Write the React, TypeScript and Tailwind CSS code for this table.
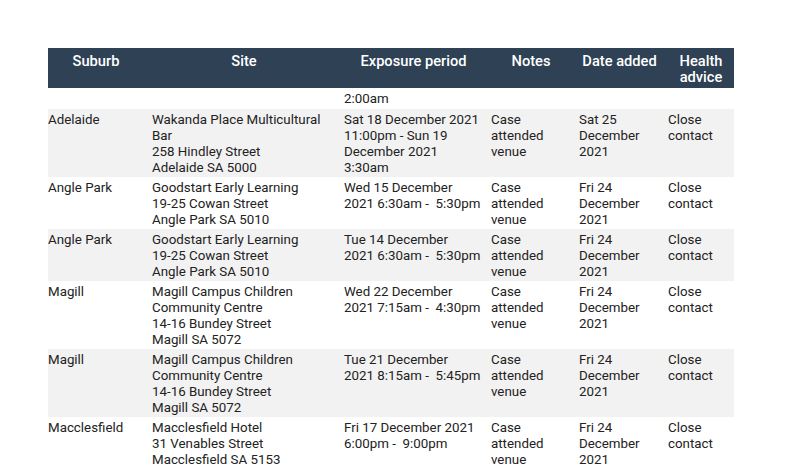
import React from "react";

type Row = { suburb: string; site: string[]; exposure: string[]; notes: string[]; date: string[]; advice: string[] };

const rows: Row[] = [
  {
    suburb: "Adelaide",
    site: ["Wakanda Place Multicultural", "Bar", "258 Hindley Street", "Adelaide SA 5000"],
    exposure: ["Sat 18 December 2021", "11:00pm - Sun 19", "December 2021", "3:30am"],
    notes: ["Case", "attended", "venue"],
    date: ["Sat 25", "December", "2021"],
    advice: ["Close", "contact"],
  },
  {
    suburb: "Angle Park",
    site: ["Goodstart Early Learning", "19-25 Cowan Street", "Angle Park SA 5010"],
    exposure: ["Wed 15 December", "2021 6:30am -\u00a0 5:30pm"],
    notes: ["Case", "attended", "venue"],
    date: ["Fri 24", "December", "2021"],
    advice: ["Close", "contact"],
  },
  {
    suburb: "Angle Park",
    site: ["Goodstart Early Learning", "19-25 Cowan Street", "Angle Park SA 5010"],
    exposure: ["Tue 14 December", "2021 6:30am -\u00a0 5:30pm"],
    notes: ["Case", "attended", "venue"],
    date: ["Fri 24", "December", "2021"],
    advice: ["Close", "contact"],
  },
  {
    suburb: "Magill",
    site: ["Magill Campus Children", "Community Centre", "14-16 Bundey Street", "Magill SA 5072"],
    exposure: ["Wed 22 December", "2021 7:15am -\u00a0 4:30pm"],
    notes: ["Case", "attended", "venue"],
    date: ["Fri 24", "December", "2021"],
    advice: ["Close", "contact"],
  },
  {
    suburb: "Magill",
    site: ["Magill Campus Children", "Community Centre", "14-16 Bundey Street", "Magill SA 5072"],
    exposure: ["Tue 21 December", "2021 8:15am -\u00a0 5:45pm"],
    notes: ["Case", "attended", "venue"],
    date: ["Fri 24", "December", "2021"],
    advice: ["Close", "contact"],
  },
  {
    suburb: "Macclesfield",
    site: ["Macclesfield Hotel", "31 Venables Street", "Macclesfield SA 5153"],
    exposure: ["Fri 17 December 2021", "6:00pm -\u00a0 9:00pm"],
    notes: ["Case", "attended", "venue"],
    date: ["Fri 24", "December", "2021"],
    advice: ["Close", "contact"],
  },
];

function Lines({ lines }: { lines: string[] }) {
  return (
    <>
      {lines.map((l, i) => (
        <div key={i} className="whitespace-nowrap">{l}</div>
      ))}
    </>
  );
}

export default function App() {
  return (
    <div className="h-[469px] w-[785px] overflow-hidden bg-white pt-12 pl-12" style={{ fontFamily: "Roboto, 'Liberation Sans', sans-serif" }}>
      <table className="w-[686px] table-fixed border-collapse text-[13.33px] leading-[16px] text-[#222]">
        <colgroup>
          <col className="w-[104px]" />
          <col className="w-[192px]" />
          <col className="w-[147px]" />
          <col className="w-[88px]" />
          <col className="w-[89px]" />
          <col className="w-[66px]" />
        </colgroup>
        <thead>
          <tr className="h-[40px] bg-[#2e4155] text-[14.67px] leading-[16px] text-white">
            <th className="pr-2 pt-[5px] text-center align-top font-medium">Suburb</th>
            <th className="pr-2 pt-[5px] text-center align-top font-medium">Site</th>
            <th className="pr-2 pt-[5px] text-center align-top font-medium">Exposure period</th>
            <th className="pr-2 pt-[5px] text-center align-top font-medium">Notes</th>
            <th className="pr-2 pt-[5px] text-center align-top font-medium">Date added</th>
            <th className="pt-[5px] text-center align-top font-medium">
              <div>Health</div>
              <div>advice</div>
            </th>
          </tr>
        </thead>
        <tbody>
          <tr className="h-[21px] bg-white">
            <td className="pt-[3px] align-top"></td>
            <td className="pt-[3px] align-top"></td>
            <td className="pt-[3px] align-top">2:00am</td>
            <td></td>
            <td></td>
            <td></td>
          </tr>
          {rows.map((r, i) => (
            <tr key={i} className={i % 2 === 0 ? "bg-[#f2f2f2]" : "bg-white"}>
              <td className="pb-[1px] pr-2 pt-[3px] align-top">{r.suburb}</td>
              <td className="pb-[1px] pr-2 pt-[3px] align-top"><Lines lines={r.site} /></td>
              <td className="pb-[1px] pr-2 pt-[3px] align-top"><Lines lines={r.exposure} /></td>
              <td className="pb-[1px] pr-2 pt-[3px] align-top"><Lines lines={r.notes} /></td>
              <td className="pb-[1px] pr-2 pt-[3px] align-top"><Lines lines={r.date} /></td>
              <td className="pb-[1px] pt-[3px] align-top"><Lines lines={r.advice} /></td>
            </tr>
          ))}
        </tbody>
      </table>
    </div>
  );
}
